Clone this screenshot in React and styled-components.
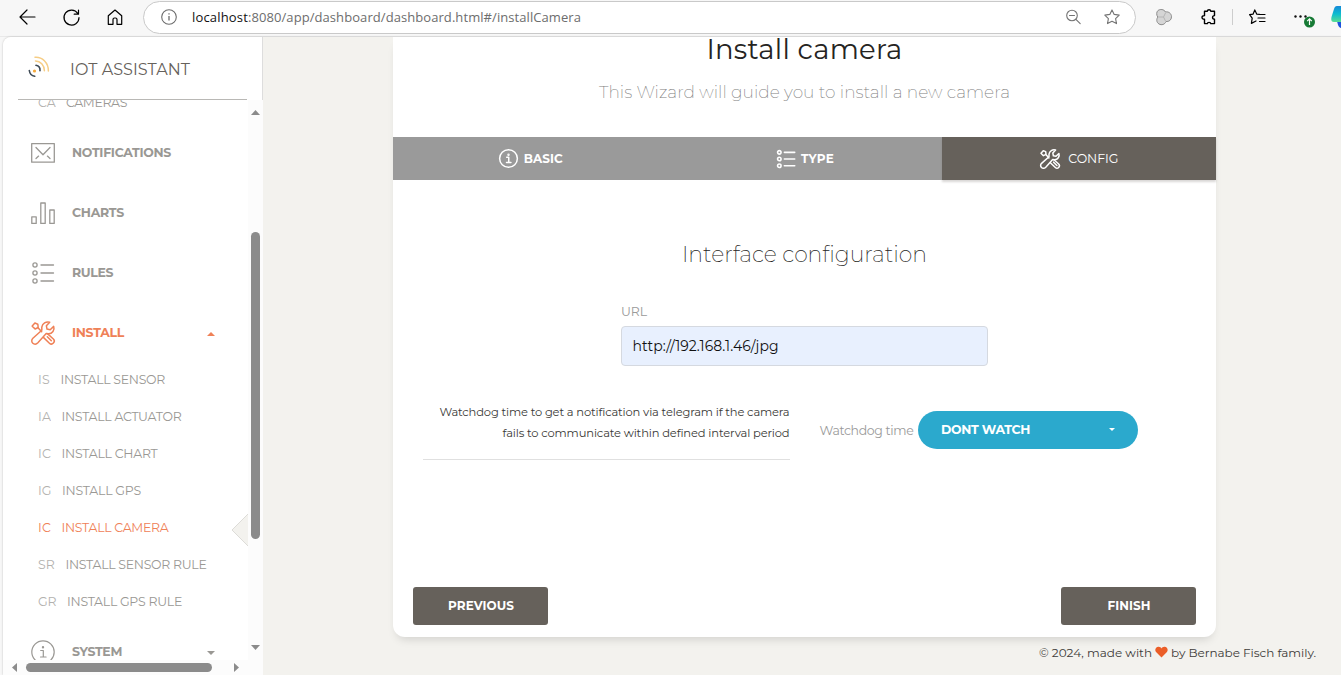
import React, { useLayoutEffect, useRef, useState } from "react";
import styled, { createGlobalStyle } from "styled-components";

const Global = createGlobalStyle`
  * { box-sizing: border-box; }
  html, body { margin: 0; overflow: hidden; }
  body { font-family: Montserrat, Inter, "Liberation Sans", sans-serif; background: #f7f7f7; }
  svg { display: block; flex: none; overflow: visible; }
`;

const Label = styled.span`
  display: inline-block;
  flex: none;
  white-space: pre;
  font-size: ${(p) => p.$size || 12.5}px;
  font-weight: ${(p) => p.$weight || 400};
  color: ${(p) => p.$color || "inherit"};
  font-family: ${(p) => p.$font || "inherit"};
`;

// Text tracked so that it fills the given width.
function Tracked({ w, size, weight, color, font, children }) {
  const ref = useRef(null);
  const [spacing, setSpacing] = useState(0);
  useLayoutEffect(() => {
    const natural = ref.current.getBoundingClientRect().width;
    setSpacing((w - natural) / children.length);
  }, []);
  return (
    <Label ref={ref} $size={size} $weight={weight} $color={color} $font={font} style={{ letterSpacing: spacing }}>
      {children}
    </Label>
  );
}

const Window = styled.div`
  width: 1341px;
  height: 675px;
  display: grid;
  grid-template-rows: 37px 638px;
  overflow: hidden;
`;

/* Browser bar */
const Chrome = styled.header`
  display: flex;
  align-items: center;
  background: #f7f7f7;
  border-bottom: 1px solid #e9e9e9;
  padding: 0 0 2px 18px;
  overflow: hidden;
`;
const NavButtons = styled.div`
  display: flex;
  flex: none;
  align-items: center;
  gap: 27px;
  width: 125px;
  padding-left: 1px;
`;
const Address = styled.div`
  width: 993px;
  flex: none;
  height: 33px;
  border: 1px solid #c9c9c9;
  border-radius: 17px;
  background: #fff;
  display: flex;
  align-items: center;
  padding: 0 15px 0 17px;
`;
const Url = styled.div`
  display: flex;
  flex: 1;
  padding-left: 15px;
`;
const AddressTools = styled.div`
  display: flex;
  align-items: center;
  gap: 23px;
  color: #747474;
`;
const Extensions = styled.div`
  display: flex;
  flex: none;
  align-items: center;
  padding-left: 20px;
`;
const Gap = styled.i`
  width: ${(p) => p.$w}px;
  flex: none;
`;
const Divider = styled.i`
  width: 1px;
  height: 16px;
  background: #cdcdcd;
`;

/* Page */
const Page = styled.div`
  margin-left: 3px;
  display: grid;
  grid-template-columns: 260px 1fr;
  background: #f3f2ee;
  border-top-left-radius: 8px;
  overflow: hidden;
  box-shadow: 0 0 2px rgba(0, 0, 0, 0.25);
`;
const Sidebar = styled.aside`
  background: #fff;
  display: grid;
  grid-template-rows: 63px 560px 15px;
  grid-template-columns: 245px 15px;
`;
const Brand = styled.div`
  grid-column: 1 / 3;
  border-right: 1px solid #dddddd;
  padding: 0 15px;
`;
const BrandInner = styled.div`
  height: 63px;
  border-bottom: 1px solid #b9b8b5;
  display: flex;
  align-items: center;
  padding: 2px 0 0 10px;
  gap: 20px;
`;
const Logo = styled.div`
  padding-bottom: 5px;
`;
const Menu = styled.nav`
  overflow: hidden;
  padding-left: 28px;
`;
const MenuBody = styled.div`
  margin-top: -16px;
`;
const Item = styled.div`
  height: 60px;
  display: flex;
  align-items: center;
  gap: 16px;
  padding-right: 33px;
  color: ${(p) => (p.$active ? "#ef8157" : "#9a9894")};
`;
const ItemText = styled.div`
  flex: 1;
  display: flex;
  padding: 0 0 2px 1px;
`;
const Caret = styled.div`
  padding-top: 1px;
`;
const Sub = styled.div`
  height: 37px;
  display: flex;
  align-items: center;
  padding-left: 7px;
  color: ${(p) => (p.$active ? "#ef8157" : "#9a9894")};
`;
const Mini = styled.span`
  display: flex;
  width: ${(p) => p.$w}px;
  opacity: ${(p) => (p.$active ? 1 : 0.75)};
`;
const SubList = styled.div`
  margin: -2px 0 2px;
`;
const Notch = styled.div`
  margin-left: auto;
  width: 16px;
  height: 34px;
  padding-top: 3px;
`;
const First = styled.div`
  height: 39px;
`;
const VBar = styled.div`
  background: #fcfcfc;
  color: #8b8b8b;
  display: flex;
  flex-direction: column;
  align-items: center;
  padding-top: 10px;
`;
const VThumb = styled.div`
  width: 9px;
  height: 307px;
  margin: 117px 0 106px;
  border-radius: 5px;
  background: #8b8b8b;
`;
const HBar = styled.div`
  grid-column: 1 / 3;
  background: #fcfcfc;
  color: #8b8b8b;
  display: flex;
  align-items: center;
  padding-left: 9px;
`;
const HThumb = styled.div`
  width: 186px;
  height: 9px;
  margin: 0 22px 0 9px;
  border-radius: 5px;
  background: #8b8b8b;
`;
const Main = styled.main`
  padding-left: 130px;
`;
const Card = styled.section`
  width: 823px;
  height: 600px;
  background: #fff;
  border-radius: 0 0 12px 12px;
  box-shadow: 0 6px 10px -4px rgba(0, 0, 0, 0.15);
  display: flex;
  flex-direction: column;
`;
const Heading = styled.div`
  height: 100px;
  display: flex;
  flex-direction: column;
  align-items: center;
`;
const Line = styled.div`
  height: ${(p) => p.$h}px;
  display: flex;
  flex: none;
  align-items: center;
  justify-content: ${(p) => p.$justify || "center"};
`;
const Tabs = styled.div`
  height: 43px;
  display: grid;
  grid-template-columns: 274.33px 274.33px 274.33px;
`;
const Tab = styled.div`
  display: flex;
  align-items: center;
  justify-content: center;
  gap: ${(p) => p.$gap}px;
  padding-left: 1px;
  background: ${(p) => (p.$active ? "#66615b" : "#9a9a9a")};
  color: #fff;
  ${(p) => p.$active && "box-shadow: 0 2px 2px rgba(102, 97, 91, .25);"}
`;
const UrlField = styled.label`
  width: 367px;
  margin: 0 auto;
  display: flex;
  flex-direction: column;
`;
const Input = styled.div`
  height: 40px;
  margin-top: 2px;
  border: 1px solid #d5d9e0;
  border-radius: 4px;
  background: #e8f0fe;
  display: flex;
  align-items: center;
  padding-left: 10.5px;
  color: #111;
`;
const Watchdog = styled.div`
  display: flex;
  padding: 0 78px 0 30px;
  margin-top: 35px;
`;
const Note = styled.div`
  width: 367px;
  height: 59px;
  padding-right: 0.5px;
  border-bottom: 1px solid #e0e0e0;
  color: #3a3936;
`;
const Picker = styled.div`
  flex: 1;
  padding: 10px 0 0 29.5px;
  display: flex;
  align-items: center;
  justify-content: space-between;
  height: 48px;
`;
const Dropdown = styled.div`
  width: 220px;
  height: 38px;
  border-radius: 19px;
  background: #2ba9cd;
  color: #fff;
  display: flex;
  align-items: center;
  justify-content: space-between;
  padding: 0 23px 1px;
`;
const Actions = styled.div`
  margin-top: auto;
  padding: 0 20px 12px;
  display: flex;
  justify-content: space-between;
`;
const Button = styled.div`
  width: 135px;
  height: 38px;
  border-radius: 3px;
  background: #66615b;
  color: #fff;
  display: flex;
  align-items: center;
  justify-content: center;
  padding: 0 0 2px 1px;
`;
const Footer = styled.footer`
  display: flex;
  align-items: center;
  justify-content: flex-end;
  gap: 3px;
  height: 30px;
  padding-right: 25px;
  color: #3d3b38;
`;

const Svg = ({ w = 16, h = w, box = `0 0 ${w} ${h}`, sw = 1.2, children }) => (
  <svg width={w} height={h} viewBox={box} fill="none" stroke="currentColor" strokeWidth={sw} strokeLinecap="round" strokeLinejoin="round">
    {children}
  </svg>
);
const Triangle = ({ dir = "up", w = 9, h = 5 }) => {
  const d = {
    up: `M0 ${h}L${w / 2} 0L${w} ${h}z`,
    down: `M0 0L${w / 2} ${h}L${w} 0z`,
    left: `M${w} 0L0 ${h / 2}L${w} ${h}z`,
    right: `M0 0L${w} ${h / 2}L0 ${h}z`,
  }[dir];
  return (
    <svg width={w} height={h} viewBox={`0 0 ${w} ${h}`}>
      <path d={d} fill="currentColor" />
    </svg>
  );
};
const Tools = ({ size = 24, sw = 1.5 }) => (
  <Svg w={size} box="0 0 24 24" sw={sw}>
    <path d="M10.8 9.3V6.2C11.4 2.4 15 .3 18.7 1.3l-3.3 3.5.6 3.3 3.2.6 3.5-3.3c1.3 3.7-1.5 7.5-5.2 7.4l-2.3-.3-8.3 9.3c-3.5 3.7-8.4-1.1-5-4.6z" />
    <path d="M1.2 5.1L3.9 2l2.9 1.2.4 3.3L4.1 8zM6.8 6.4l3.9 4.3M12.4 16.4l6 5.8c2.8 2.6 6.6-1.5 4-4.2l-5.7-5.1M16.3 15.8l4 4" />
  </Svg>
);
const Info = ({ size = 24, sw = 1.2 }) => (
  <Svg w={size} box="0 0 24 24" sw={sw}>
    <circle cx="12" cy="12" r="11.2" />
    <path d="M9.7 10.5h2.6v6.3M9.5 17h5.6" />
    <circle cx="12" cy="7.3" r=".6" fill="currentColor" />
  </Svg>
);
const List = ({ size = 24, sw = 1.3 }) => (
  <Svg w={size} box="0 0 24 24" sw={sw}>
    {[4, 12, 20].map((y) => (
      <React.Fragment key={y}>
        <circle cx="4" cy={y} r="2.1" />
        <path d={`M10 ${y}h12.5`} />
      </React.Fragment>
    ))}
  </Svg>
);
const Mail = () => (
  <Svg w={24} sw={1.3}>
    <path d="M.7 2.6h22.6v18.6H.7zM5 6.5l7 7.2 7-7.200M5 17.500l2.600-2.400M19 17.500l-2.600-2.400" />
  </Svg>
);
const Bars = () => (
  <Svg w={24} sw={1.3}>
    <path d="M.8 15.8h4.4v6.6H.8zM9.8 2h4.4v20.4H9.8zM18.8 9h4.4v13.400h-4.400z" />
  </Svg>
);
const Dish = () => (
  <svg width="22" height="22" viewBox="0 0 22 22" fill="none" strokeLinecap="round" strokeWidth="1.5">
    <path d="M7 1.2C14 .6 20.5 6.5 20.4 15" stroke="#f6cd85" />
    <path d="M7.5 5c5 0 8.8 4.3 8.9 9.7" stroke="#f6cd85" />
    <path d="M8 9.3c2.8.5 4.200 2.800 4 5.400M1.300 14.500c.4 3 2.400 5.300 5.400 5.800" stroke="#3f4b56" strokeWidth="1.600" />
    <circle cx="6.500" cy="15" r="1.600" fill="#f5a93c" />
  </svg>
);
const STAR = "M8 .9l2.200 4.500 5 .7-3.600 3.500.9 5L8 12.200l-4.500 2.400.9-5L.8 6.100l5-.7z";

const SEGOE = '"Segoe UI", "Open Sans", "Noto Sans", sans-serif';

const subs = [
  ["IS", 12, "INSTALL SENSOR", 104.5, 22.5],
  ["IA", 13, "INSTALL ACTUATOR", 120, 23.5],
  ["IC", 13, "INSTALL CHART", 96, 23.5],
  ["IG", 13.5, "INSTALL GPS", 79, 24],
  ["IC", 13, "INSTALL CAMERA", 107, 23.5],
  ["SR", 17, "INSTALL SENSOR RULE", 141, 27.5],
  ["GR", 18.5, "INSTALL GPS RULE", 115, 29],
];

function SubItem({ row: [mini, mw, text, w, offset], active }) {
  return (
    <Sub $active={active}>
      <Mini $w={offset} $active={active}>
        <Tracked w={mw} size={12.5}>{mini}</Tracked>
      </Mini>
      <Tracked w={w} size={12.5}>{text}</Tracked>
      {active && (
        <Notch>
          <svg width="16" height="32" viewBox="0 0 16 32">
            <path d="M16 0L0 16L16 32" fill="#f3f2ee" stroke="#dddcd8" />
          </svg>
        </Notch>
      )}
    </Sub>
  );
}

function MenuItem({ icon, text, w, caret, active }) {
  return (
    <Item $active={active}>
      {icon}
      <ItemText>
        <Tracked w={w} size={12.5} weight={700}>{text}</Tracked>
      </ItemText>
      {caret && <Caret><Triangle dir={caret} w={8} h={4} /></Caret>}
    </Item>
  );
}

function BrowserBar() {
  return (
    <Chrome>
      <NavButtons>
        <Svg w={17} sw={1.2}><path d="M16 8H1.300M8 1L1 8l7 7" /></Svg>
        <Svg w={17} sw={1.2}><path d="M14.800 4.500A7.500 7.500 0 1 0 16 8.500M15.500 1v4.200h-4.300" /></Svg>
        <Svg w={16} sw={1.2}><path d="M1.300 6.800L8 1l6.700 5.800v8.500H10V10.500c0-1-.6-1.500-1.500-1.500h-1C6.600 9 6 9.500 6 10.500v4.800H1.300z" /></Svg>
      </NavButtons>
      <Address>
        <svg width="16" height="16" viewBox="0 0 16 16" fill="none" stroke="#6c6c6c" strokeWidth="1.1">
          <circle cx="8" cy="8" r="7.3" /><path d="M8 7v4.500M8 4.300v1.300" strokeWidth="1.300" />
        </svg>
        <Url>
          <Tracked w={56} size={13} color="#111" font={SEGOE}>localhost</Tracked>
          <Tracked w={333} size={13} color="#6d6d6d" font={SEGOE}>:8080/app/dashboard/dashboard.html#/installCamera</Tracked>
        </Url>
        <AddressTools>
          <Svg w={16} sw={1.1}><circle cx="7" cy="6.500" r="5.300" /><path d="M10.900 10.400l4.300 4.300M4.500 6.500h5" /></Svg>
          <Svg w={16} sw={1.1}><path d={STAR} /></Svg>
        </AddressTools>
      </Address>
      <Extensions>
        <svg width="16" height="16" viewBox="0 0 16 16" fill="#d5d5d5" stroke="#8c8c8c">
          <path d="M2 1.500C4 0 8 0 9.500 3c3-.7 6 1.500 6 4.800 0 3.200-2.500 5-5.500 4.700-1 3-4.500 4-7 2.500C0 13 .5 10 1.800 8 .3 6 .3 3 2 1.500z" />
          <path d="M2 8h5.500l2-4M7.500 8l2 4" stroke="#b5b5b5" />
        </svg>
        <Gap $w={29} />
        <Svg w={15} h={16} sw={1.4}><path d="M3.500 2.300h2.800c.2-2 3.300-2 3.500 0h3.700v4.300c-2.600.1-2.600 3.600 0 3.700v4.300H9.800c-.2-1.700-3.300-1.700-3.500 0H3.500v-4.300c-3.300.2-3.300-3.900 0-3.700z" /></Svg>
        <Gap $w={16} />
        <Divider />
        <Gap $w={16} />
        <Svg w={17} h={16} sw={1.2}><path d="M10.500 5.400L7.800 5.200 5.800.9 4 5.200.6 5.700l2.600 3.500-.8 5.200L7 12M10.500 5.500h5.500M9 9h7M10.500 12.500H16" /></Svg>
        <Gap $w={28} />
        <svg width="22" height="20" viewBox="0 0 22 20">
          <g fill="#111"><circle cx="1.500" cy="9.500" r="1.200" /><circle cx="6.500" cy="9.500" r="1.200" /><circle cx="11.500" cy="9.500" r="1.200" /></g>
          <circle cx="15.500" cy="15" r="5.500" fill="#177a35" />
          <path d="M15.500 18v-6M13.200 14.200l2.300-2.300 2.300 2.300" fill="none" stroke="#fff" strokeWidth="1.200" />
        </svg>
        <Gap $w={15} />
        <svg width="24" height="22" viewBox="0 0 24 22">
          <defs><linearGradient id="co" x1="0" y1="0" x2="0" y2="1"><stop stopColor="#1689d8" /><stop offset=".5" stopColor="#0cbcd0" /><stop offset="1" stopColor="#5bdd91" /></linearGradient></defs>
          <path d="M6 15h14v7h-9c-3 0-4-2-5-7z" fill="#1d52dd" />
          <path d="M6 0h18l-5 16H3c-3 0-3-2-2.500-5L3 3c.5-2 1.500-3 3-3z" fill="url(#co)" />
        </svg>
      </Extensions>
    </Chrome>
  );
}

export default function App() {
  return (
    <Window>
      <Global />
      <BrowserBar />
      <Page>
        <Sidebar>
          <Brand>
            <BrandInner>
              <Logo><Dish /></Logo>
              <Tracked w={120} size={16} color="#66615b">IOT ASSISTANT</Tracked>
            </BrandInner>
          </Brand>
          <Menu>
            <MenuBody>
              <First><SubItem row={["CA", 18, "CAMERAS", 61, 28]} /></First>
              <MenuItem icon={<Mail />} text="NOTIFICATIONS" w={99} />
              <MenuItem icon={<Bars />} text="CHARTS" w={52} />
              <MenuItem icon={<List />} text="RULES" w={41} />
              <MenuItem icon={<Tools />} text="INSTALL" w={52} caret="up" active />
              <SubList>
                {subs.map((row, i) => <SubItem key={row[2]} row={row} active={i === 4} />)}
              </SubList>
              <MenuItem icon={<Info />} text="SYSTEM" w={50} caret="down" />
            </MenuBody>
          </Menu>
          <VBar>
            <Triangle /><VThumb /><Triangle dir="down" />
          </VBar>
          <HBar>
            <Triangle dir="left" w={5} h={9} /><HThumb /><Triangle dir="right" w={5} h={9} />
          </HBar>
        </Sidebar>
        <Main>
          <Card>
            <Heading>
              <Line $h={23}><Tracked w={196} size={27.5} weight={400} color="#252422">Install camera</Tracked></Line>
              <Line $h={64}><Tracked w={411} size={17} weight={200} color="#808080">This Wizard will guide you to install a new camera</Tracked></Line>
            </Heading>
            <Tabs>
              <Tab $gap={6}><Info size={19} sw={1.9} /><Tracked w={39} size={12} weight={700}>BASIC</Tracked></Tab>
              <Tab $gap={5}><List size={20} sw={1.9} /><Tracked w={33} size={12} weight={700}>TYPE</Tracked></Tab>
              <Tab $active $gap={8}><Tools size={20} sw={1.8} /><Tracked w={50} size={12.5} weight={400}>CONFIG</Tracked></Tab>
            </Tabs>
            <Line $h={149}><Tracked w={245} size={22} weight={200} color="#252422">Interface configuration</Tracked></Line>
            <UrlField style={{ marginTop: -31 }}>
              <Line $h={26} $justify="flex-start"><Tracked w={26} size={12.5} color="#9a9a9a">URL</Tracked></Line>
              <Input><Tracked w={146} size={14}>http://192.168.1.46/jpg</Tracked></Input>
            </UrlField>
            <Watchdog>
              <Note>
                <Line $h={21} $justify="flex-end"><Tracked w={350} size={11.5}>Watchdog time to get a notification via telegram if the camera</Tracked></Line>
                <Line $h={21} $justify="flex-end"><Tracked w={287} size={11.5}>fails to communicate within defined interval period</Tracked></Line>
              </Note>
              <Picker>
                <Tracked w={94} size={12.5} color="#9a9a9a">Watchdog time</Tracked>
                <Dropdown><Tracked w={89} size={12.5} weight={700}>DONT WATCH</Tracked><Triangle dir="down" w={6} h={3} /></Dropdown>
              </Picker>
            </Watchdog>
            <Actions>
              <Button><Tracked w={66} size={12} weight={700}>PREVIOUS</Tracked></Button>
              <Button><Tracked w={43} size={12} weight={700}>FINISH</Tracked></Button>
            </Actions>
          </Card>
          <Footer>
            <Tracked w={113} size={12}>© 2024, made with</Tracked>
            <svg width="13" height="12" viewBox="0 0 13 12"><path d="M6.500 11.500L1.300 6.300C-.5 4.300.3 1 3.200.7 4.800.5 6 1.300 6.500 2.500 7 1.300 8.200.5 9.800.7c2.900.3 3.700 3.600 1.900 5.600z" fill="#eb5e28" /></svg>
            <Tracked w={145} size={12}>by Bernabe Fisch family.</Tracked>
          </Footer>
        </Main>
      </Page>
    </Window>
  );
}
